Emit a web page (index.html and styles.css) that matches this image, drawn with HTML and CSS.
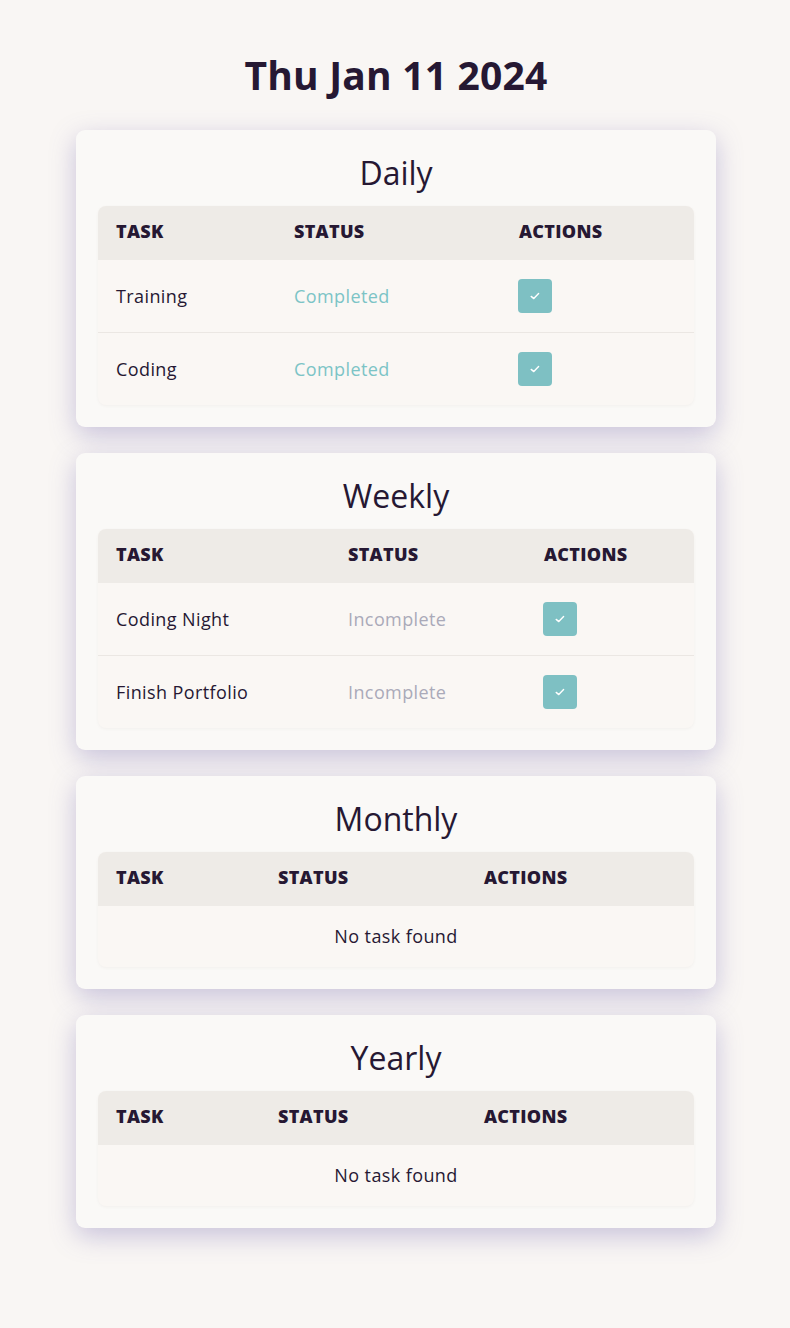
FILE: index.html
```html
<!DOCTYPE html>
<html lang="en">
<head>
<meta charset="utf-8">
<title>Tasks</title>
<link rel="stylesheet" href="styles.css">
</head>
<body>
<main class="page">
  <h1 class="date">Thu Jan 11 2024</h1>

  <section class="card">
    <h2 class="card-title">Daily</h2>
    <table class="tasks">
      <colgroup><col class="c-daily-1"><col class="c-daily-2"><col class="c-daily-3"></colgroup>
      <thead><tr><th>Task</th><th>Status</th><th>Actions</th></tr></thead>
      <tbody>
        <tr><td>Training</td><td class="done">Completed</td><td><button class="check" aria-label="toggle"><svg viewBox="0 0 14 14" width="14" height="14"><path d="M3.2 7.4 L5.8 9.6 L10.6 4.6" fill="none" stroke="#fff" stroke-width="1.4" stroke-linecap="round" stroke-linejoin="round"/></svg></button></td></tr>
        <tr><td>Coding</td><td class="done">Completed</td><td><button class="check" aria-label="toggle"><svg viewBox="0 0 14 14" width="14" height="14"><path d="M3.2 7.4 L5.8 9.6 L10.6 4.6" fill="none" stroke="#fff" stroke-width="1.4" stroke-linecap="round" stroke-linejoin="round"/></svg></button></td></tr>
      </tbody>
    </table>
  </section>

  <section class="card">
    <h2 class="card-title">Weekly</h2>
    <table class="tasks">
      <colgroup><col class="c-weekly-1"><col class="c-weekly-2"><col class="c-weekly-3"></colgroup>
      <thead><tr><th>Task</th><th>Status</th><th>Actions</th></tr></thead>
      <tbody>
        <tr><td>Coding Night</td><td class="todo">Incomplete</td><td><button class="check" aria-label="toggle"><svg viewBox="0 0 14 14" width="14" height="14"><path d="M3.2 7.4 L5.8 9.6 L10.6 4.6" fill="none" stroke="#fff" stroke-width="1.4" stroke-linecap="round" stroke-linejoin="round"/></svg></button></td></tr>
        <tr><td>Finish Portfolio</td><td class="todo">Incomplete</td><td><button class="check" aria-label="toggle"><svg viewBox="0 0 14 14" width="14" height="14"><path d="M3.2 7.4 L5.8 9.6 L10.6 4.6" fill="none" stroke="#fff" stroke-width="1.4" stroke-linecap="round" stroke-linejoin="round"/></svg></button></td></tr>
      </tbody>
    </table>
  </section>

  <section class="card">
    <h2 class="card-title">Monthly</h2>
    <table class="tasks">
      <colgroup><col class="c-empty-1"><col class="c-empty-2"><col class="c-empty-3"></colgroup>
      <thead><tr><th>Task</th><th>Status</th><th>Actions</th></tr></thead>
      <tbody>
        <tr><td class="empty" colspan="3">No task found</td></tr>
      </tbody>
    </table>
  </section>

  <section class="card">
    <h2 class="card-title">Yearly</h2>
    <table class="tasks">
      <colgroup><col class="c-empty-1"><col class="c-empty-2"><col class="c-empty-3"></colgroup>
      <thead><tr><th>Task</th><th>Status</th><th>Actions</th></tr></thead>
      <tbody>
        <tr><td class="empty" colspan="3">No task found</td></tr>
      </tbody>
    </table>
  </section>
</main>
</body>
</html>
```

FILE: styles.css
```css
* { box-sizing: border-box; }

html, body {
  margin: 0;
  padding: 0;
  background: #f9f6f4;
}

body {
  font-family: "Open Sans", "Lato", "DejaVu Sans", sans-serif;
  color: #261833;
  padding-left: 2px;
}

.page {
  width: 640px;
  margin: 0 auto;
  padding: 47px 0 100px;
  display: flex;
  flex-direction: column;
  gap: 26px;
}

.date {
  margin: 0 0 1px;
  text-align: center;
  font-size: 39px;
  line-height: 56px;
  font-weight: 700;
  letter-spacing: 0.2px;
}

.card {
  background: #faf9f7;
  border-radius: 9px;
  padding: 22px;
  box-shadow: 0 8px 26px rgba(105, 95, 170, 0.34);
}

.card-title {
  margin: -2px 0 11px;
  text-align: center;
  font-size: 32px;
  line-height: 45px;
  font-weight: 500;
}

.tasks {
  width: 100%;
  border-collapse: collapse;
  table-layout: fixed;
  border-radius: 8px;
  overflow: hidden;
  background: #faf7f4;
  box-shadow: 0 1px 3px rgba(120, 100, 90, 0.06);
}

.tasks th {
  background: #eeebe7;
  text-align: left;
  text-transform: uppercase;
  font-size: 18px;
  line-height: 24px;
  font-weight: 800;
  padding: 13px 18px 17px;
  letter-spacing: 0.3px;
}

.tasks td {
  font-size: 18px;
  line-height: 24px;
  padding: 19px 18px;
  vertical-align: middle;
  letter-spacing: 0.4px;
}

.tasks td.text {
  padding-bottom: 21px;
}

.tasks tbody tr + tr td {
  border-top: 1px solid #ebe7e3;
}

.done { color: #7cc4c6; }
.todo { color: #aaaab9; }

.tasks td.empty {
  text-align: center;
  padding: 18px 18px 19px;
}

.check {
  display: flex;
  align-items: center;
  justify-content: center;
  width: 34px;
  height: 34px;
  margin-left: -1px;
  padding: 0;
  border: none;
  border-radius: 4px;
  background: #7ec0c3;
  cursor: pointer;
}

.c-daily-1 { width: 178px; }
.c-daily-2 { width: 225px; }
.c-daily-3 { width: 193px; }
.c-weekly-1 { width: 232px; }
.c-weekly-2 { width: 196px; }
.c-weekly-3 { width: 168px; }
.c-empty-1 { width: 162px; }
.c-empty-2 { width: 206px; }
.c-empty-3 { width: 228px; }
```
